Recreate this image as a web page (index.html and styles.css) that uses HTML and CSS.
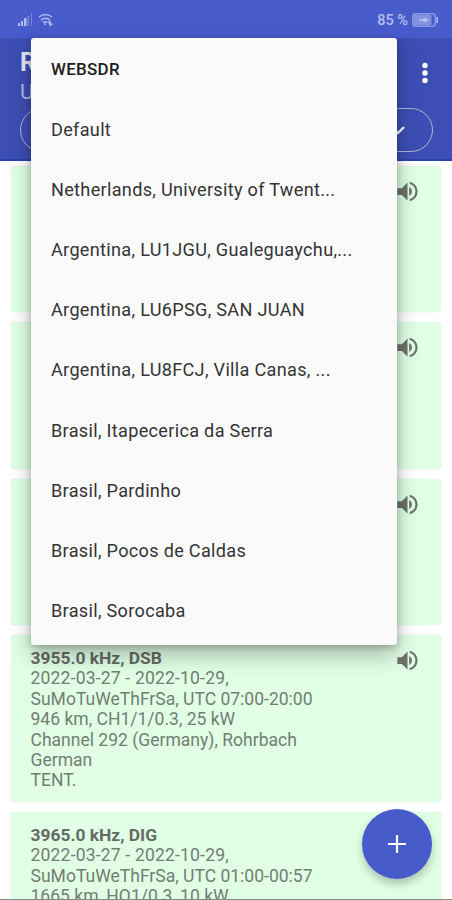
FILE: index.html
```html
<!DOCTYPE html>
<html lang="en">
<head>
<meta charset="utf-8">
<title>WebSDR</title>
<link rel="stylesheet" href="styles.css">
</head>
<body>
<svg class="defs" aria-hidden="true">
  <symbol id="speaker" viewBox="0 0 24 24">
    <path d="M3 9v6h4l5 5V4L7 9H3z"/>
    <path d="M13.5 7.97v8.05A4.5 4.5 0 0 0 16 12a4.5 4.5 0 0 0-2.5-4.03z"/>
    <path d="M14 3.23v2.06a7 7 0 0 1 0 13.42v2.06a9 9 0 0 0 0-17.54z"/>
  </symbol>
</svg>
<div class="screen">
  <div class="status">
    <div class="signals">
      <svg width="15" height="14" viewBox="0 0 15 14"><path class="bars" d="M0 13v-3h2v3zM3 13V8h2v5zM6 13V5h2.500v8z"/><path class="dim" d="M9.500 13V3H11v10zM13 13V0h1v13z"/></svg>
      <svg width="16" height="14" viewBox="0 0 16 14"><path class="wave" d="M1 4Q7.500-1 14 4M3 7Q7.500 3.500 12 7M5 9.500Q7.500 8 9.500 9.500"/><path class="bars" d="M5.500 10.500h3L7 12.500zM10 9l2-2 1 3 2 1-3 2.500z"/></svg>
    </div>
    <div class="power">
      <span>85 %</span>
      <svg width="27" height="14" viewBox="0 0 27 14"><rect class="cell" x=".8" y=".8" width="22.500" height="12.400" rx="3"/><rect class="charge" x="1.500" y="1.500" width="18" height="11" rx="2"/><path class="bars" d="M24.500 4h1.500v6h-1.500zM7 6.200h4l1-2 5 2.800-5 2.600-1-1.700H7z"/></svg>
    </div>
  </div>
  <header class="appbar">
    <div class="heading"><div><b>R</b><span>U</span></div>
      <svg class="more" width="8" height="24" viewBox="0 0 8 24"><circle cx="4" cy="4.500" r="2.700"/><circle cx="4" cy="12" r="2.700"/><circle cx="4" cy="19.500" r="2.700"/></svg>
    </div>
    <div class="select"><svg width="16" height="12" viewBox="0 0 16 12"><path d="M2 3l6 6 6-6"/></svg></div>
  </header>
  <main class="list">
    <article class="card short"><svg class="sound"><use href="#speaker"/></svg></article>
    <article class="card short"><svg class="sound"><use href="#speaker"/></svg></article>
    <article class="card short"><svg class="sound"><use href="#speaker"/></svg></article>
    <article class="card">
      <div class="info"><b>3955.0 kHz, DSB</b><span class="dates">2022-03-27 - 2022-10-29,</span><span>SuMoTuWeThFrSa, UTC 07:00-20:00</span><span>946 km, CH1/1/0.3, 25 kW</span><span>Channel 292 (Germany), Rohrbach</span><span>German</span><span>TENT.</span></div>
      <svg class="sound"><use href="#speaker"/></svg>
    </article>
    <article class="card">
      <div class="info"><b>3965.0 kHz, DIG</b><span class="dates">2022-03-27 - 2022-10-29,</span><span>SuMoTuWeThFrSa, UTC 01:00-00:57</span><span>1665 km, HQ1/0.3, 10 kW</span><span>&nbsp;</span></div>
    </article>
  </main>
  <button class="fab" aria-label="Add"><svg width="20" height="20" viewBox="0 0 20 20"><path d="M10 1v18M1 10h18"/></svg></button>
  <ul class="menu">
    <li class="title">WEBSDR</li>
    <li>Default</li>
    <li>Netherlands, University of Twent...</li>
    <li>Argentina, LU1JGU, Gualeguaychu,...</li>
    <li>Argentina, LU6PSG, SAN JUAN</li>
    <li>Argentina, LU8FCJ, Villa Canas, ...</li>
    <li>Brasil, Itapecerica da Serra</li>
    <li>Brasil, Pardinho</li>
    <li>Brasil, Pocos de Caldas</li>
    <li>Brasil, Sorocaba</li>
  </ul>
</div>
</body>
</html>
```
FILE: styles.css
```css
* { box-sizing: border-box; }
body { margin: 0; font-family: Roboto, "Liberation Sans", sans-serif; }
.defs { position: absolute; width: 0; height: 0; }
.screen { position: relative; width: 452px; height: 900px; overflow: hidden; background: #fff; border-bottom: 1px solid #858985; }
.status { height: 38px; padding: 2px 13px 0 18px; display: flex; align-items: center; justify-content: space-between; background: #485bcb; color: #b4beee; }
.signals, .power { display: flex; align-items: center; gap: 5px; }
.power { gap: 4px; font-size: 14.500px; font-weight: 500; }
.bars { fill: #b2bcef; }
.dim { fill: #7585db; }
.wave { fill: none; stroke: #b2bcef; stroke-width: 1.500; }
.cell { fill: none; stroke: #8998e2; stroke-width: 1.500; }
.charge { fill: #8392df; }
.appbar { height: 123px; padding: 11px 19px 0 20px; background: #3d4eb4; border-bottom: 2px solid #2942b4; color: #e5e8f6; }
.heading { height: 59px; display: flex; justify-content: space-between; align-items: flex-start; }
.heading b, .heading span { display: block; line-height: 28px; }
.heading b { font-size: 25px; line-height: 27px; }
.heading span { font-size: 21px; line-height: 32px; color: #b3bbe1; }
.more { fill: #fff; margin: 12px 4px 0 0; }
.select { height: 44px; border: 1.500px solid #b2b5ce; border-radius: 22px; display: flex; align-items: center; justify-content: flex-end; padding-right: 26px; }
.select svg { fill: none; stroke: #fff; stroke-width: 2.300; }
.list { padding: 5px 11px 0; display: flex; flex-direction: column; gap: 10.200px; }
.card { flex: none; display: flex; justify-content: space-between; padding: 12px 20px 12px 19.500px; background: #e0ffe5; border-radius: 4px; box-shadow: 0 0 1px rgba(90, 130, 95, .4); color: #727e73; }
.card.short { height: 146.200px; justify-content: flex-end; }
.info { padding-top: .900px; margin-bottom: -.900px; font-size: 17.550px; line-height: 20.400px; white-space: nowrap; }
.info b, .info span { display: block; }
.info b { color: #656a65; font-size: 17.400px; }
.info .dates { letter-spacing: .18px; }
.sound { width: 27px; height: 27px; fill: #6b716b; }
.menu { position: absolute; left: 31px; top: 38px; width: 366px; height: 607px; margin: 0; padding: 1.500px 20px 3px; list-style: none; background: #fafafa; border-radius: 3px; box-shadow: 0 10px 22px rgba(0, 0, 0, .28), 0 2px 6px rgba(0, 0, 0, .2); color: #343434; font-size: 18.100px; letter-spacing: .31px; }
.menu li { height: 60.200px; line-height: 60.200px; white-space: nowrap; }
.menu .title { line-height: 58.400px; font-size: 16.900px; font-weight: 500; color: #202020; }
.fab { position: absolute; left: 362px; top: 809px; width: 70px; height: 70px; padding: 0; border: 0; border-radius: 50%; display: flex; align-items: center; justify-content: center; background: #485bcb; box-shadow: 0 5px 9px rgba(0, 0, 0, .24); }
.fab svg { fill: none; stroke: #fff; stroke-width: 2.200; }
```
